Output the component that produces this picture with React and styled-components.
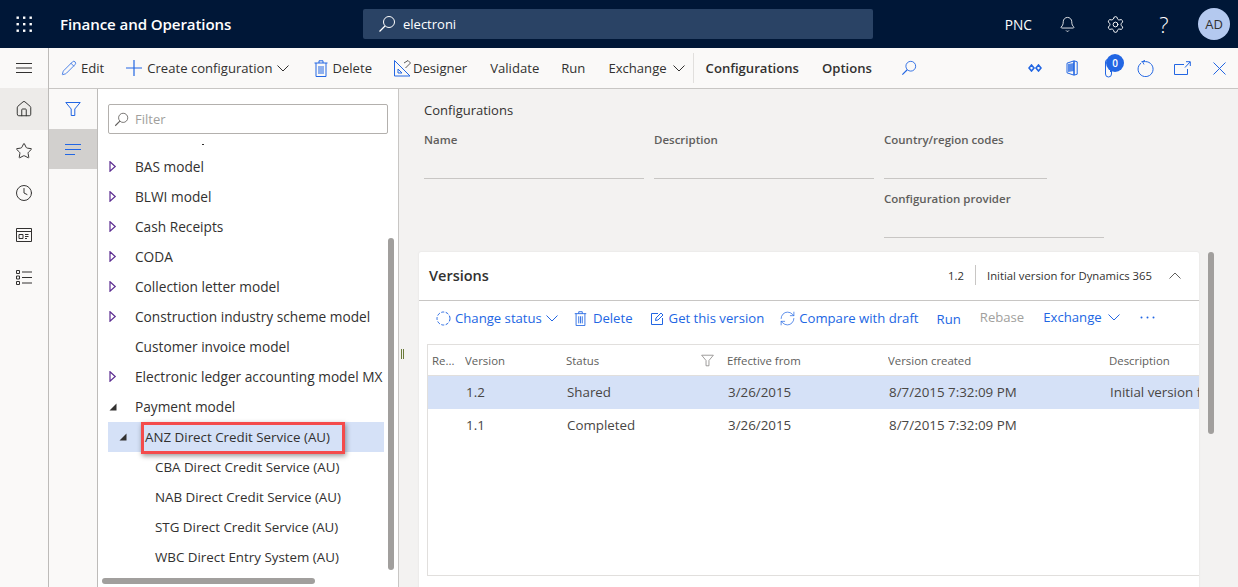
import React from "react";
import styled, { createGlobalStyle } from "styled-components";
import { Pencil, Home, Star, Clock, Bell, Settings, RefreshCw } from "lucide-react";

const GlobalStyle = createGlobalStyle`
    html, body { margin: 0; padding: 0; }
    body {
        font-family: "Open Sans", "Liberation Sans", sans-serif;
        font-size: 13px;
        color: #323130;
        background: #f3f2f1;
        overflow: hidden;
    }
    * { box-sizing: border-box; }
`;

const BLUE = "#2266e3";

const Page = styled.div`
    width: 1238px;
    height: 587px;
    display: flex;
    flex-direction: column;
    overflow: hidden;
`;

/* top bar */
const Header = styled.header`
    height: 48px;
    flex: none;
    background: #001737;
    color: #fff;
    display: flex;
    align-items: center;
`;
const Waffle = styled.div`
    width: 48px;
    display: flex;
    justify-content: center;
    margin-right: 12px;
`;
const AppName = styled.div`
    width: 303px;
    font-size: 15.1px;
    font-weight: 600;
    letter-spacing: -0.1px;
`;
const SearchBox = styled.div`
    width: 510px;
    height: 30px;
    background: #2a4365;
    border-radius: 2px;
    display: flex;
    align-items: center;
    gap: 7px;
    padding-left: 15px;
    font-size: 13px;
    color: #fff;
`;
const HeaderRight = styled.div`
    margin-left: auto;
    display: flex;
    align-items: center;
    padding-right: 8px;
`;
const Company = styled.span`
    font-size: 13.7px;
    margin-right: 11px;
`;
const HeaderIcon = styled.div`
    width: 48px;
    display: flex;
    justify-content: center;
    align-items: center;
    font-size: 22px;
    font-weight: 300;
`;
const HelpMark = styled.span`
    margin-left: 2px;
`;
const Avatar = styled.div`
    width: 32px;
    height: 32px;
    margin-left: 11px;
    border-radius: 50%;
    background: #b4c9ef;
    color: #323130;
    font-size: 13px;
    display: flex;
    align-items: center;
    justify-content: center;
`;

/* shell */
const Shell = styled.div`
    flex: 1;
    display: flex;
    min-height: 0;
`;
const NavRail = styled.nav`
    width: 49px;
    flex: none;
    background: #faf9f8;
    border-right: 1px solid #bdbbb9;
`;
const NavItem = styled.div`
    height: 42px;
    width: 48px;
    display: flex;
    align-items: center;
    justify-content: center;
    background: ${p => (p.$active ? "#edebe9" : "transparent")};
`;
const MenuItem = styled(NavItem)`
    height: 40px;
`;
const Main = styled.div`
    flex: 1;
    min-width: 0;
    display: flex;
    flex-direction: column;
`;

/* action bar */
const ActionBar = styled.div`
    height: 41px;
    flex: none;
    background: #faf9f8;
    border-bottom: 1px solid #c8c6c4;
    display: flex;
    align-items: center;
    padding-left: 12px;
`;
const Action = styled.div`
    display: flex;
    align-items: center;
    gap: ${p => p.$gap ?? 4}px;
    margin-right: ${p => p.$mr ?? 21}px;
    font-size: 13.1px;
    font-weight: ${p => (p.$bold ? 600 : 400)};
    white-space: nowrap;
`;
const Divider = styled.div`
    width: 1px;
    height: 30px;
    background: #e1dfdd;
    margin-right: 12px;
`;
const ActionRight = styled.div`
    margin-left: auto;
    display: flex;
    align-self: stretch;
`;
const IconSlot = styled.div`
    position: relative;
    width: 37px;
    display: flex;
    align-items: center;
    justify-content: center;
`;
const Badge = styled.span`
    position: absolute;
    left: 16px;
    top: 6px;
    width: 18px;
    height: 18px;
    border-radius: 50%;
    background: ${BLUE};
    color: #fff;
    font-size: 10px;
    font-weight: 600;
    display: flex;
    align-items: center;
    justify-content: center;
`;

/* content */
const Content = styled.div`
    flex: 1;
    min-height: 0;
    display: flex;
`;
const FilterRail = styled.div`
    width: 49px;
    flex: none;
    background: #faf9f8;
    border-right: 1px solid #bdbbb9;
`;
const RailBtn = styled.div`
    height: 40px;
    display: flex;
    align-items: center;
    justify-content: center;
    background: ${p => (p.$active ? "#d2d0ce" : "transparent")};
`;
const TreePane = styled.div`
    position: relative;
    width: 301px;
    flex: none;
    background: #fff;
    border-right: 1px solid #c8c6c4;
    padding: 15px 10px 0;
    overflow: hidden;
`;
const FilterInput = styled.div`
    height: 30px;
    border: 1px solid #b3b0ad;
    border-radius: 2px;
    display: flex;
    align-items: center;
    gap: 6px;
    padding-left: 5px;
    color: #a19f9d;
`;
const TreeList = styled.div`
    margin-top: 8px;
    height: 430px;
    width: 276px;
    overflow: hidden;
`;
const TreeClip = styled.div`
    height: 10px;
    padding: 2px 0 0 94px;
`;
const ClippedMark = styled.div`
    width: 2px;
    height: 1px;
    background: #323130;
`;
const TreeRow = styled.div`
    position: relative;
    height: 30px;
    display: flex;
    align-items: center;
    padding-left: ${p => 27 + p.$depth * 10}px;
    padding-bottom: ${p => (p.$root ? 2 : 0)}px;
    background: ${p => (p.$selected ? "#d5e1f7" : "transparent")};
    font-size: ${p => (p.$root ? 13.7 : 13.35)}px;
    font-weight: ${p => (p.$root ? 500 : 400)};
    white-space: nowrap;
`;
const Expander = styled.span`
    position: absolute;
    left: ${p => 1 + p.$depth * 10}px;
    top: 9px;
    display: flex;
`;
const Highlight = styled.div`
    position: absolute;
    left: 33px;
    top: 0;
    width: 204px;
    height: 32px;
    border: 3px solid #f44b4b;
    box-shadow: 1px 2px 5px rgba(0, 0, 0, 0.4);
`;
const VScroll = styled.div`
    position: absolute;
    left: ${p => p.$left}px;
    top: ${p => p.$top}px;
    width: 6px;
    height: ${p => p.$height}px;
    border-radius: 3px;
    background: #a19f9d;
`;
const HScroll = styled.div`
    position: absolute;
    left: 4px;
    top: 489px;
    width: 213px;
    height: 6px;
    border-radius: 3px;
    background: #a19f9d;
`;

const Details = styled.div`
    position: relative;
    flex: 1;
    min-width: 0;
    background: #f3f2f1;
    padding: 0 0 0 20px;
    overflow: hidden;
`;
const Splitter = styled.div`
    position: absolute;
    left: 2px;
    top: 260px;
    width: 3px;
    height: 10px;
    border-left: 1px solid #6b7a3a;
    border-right: 1px solid #6b7a3a;
`;
const Form = styled.div`
    padding: 12px 0 0 5px;
    height: 163px;
`;
const FormTitle = styled.div`
    height: 18px;
    line-height: 18px;
`;
const Fields = styled.div`
    display: flex;
    gap: 10px;
    margin-top: 12px;
`;
const FieldCol = styled.div`
    display: flex;
    flex-direction: column;
    gap: 11px;
`;
const Field = styled.div`
    width: ${p => p.$width}px;
    height: 48px;
    border-bottom: 1px solid #c8c6c4;
    font-size: 11.5px;
    font-weight: 600;
    color: #605e5c;
    line-height: 18px;
`;

const Card = styled.section`
    width: 780px;
    height: 340px;
    background: #fff;
    border-radius: 2px;
    box-shadow: 0 0 2px rgba(0, 0, 0, 0.1);
`;
const CardHeader = styled.div`
    height: 49px;
    border-bottom: 1px solid #c8c6c4;
    display: flex;
    align-items: center;
    padding: 0 18px 2px 10px;
`;
const CardTitle = styled.div`
    font-size: 14.5px;
    font-weight: 600;
`;
const CardSummary = styled.div`
    margin-left: auto;
    display: flex;
    align-items: center;
    font-size: 11.3px;
    gap: 11px;
`;
const SummarySep = styled.div`
    width: 1px;
    height: 20px;
    background: #c8c6c4;
`;
const SummaryToggle = styled.span`
    display: flex;
    margin-left: 6px;
    color: #605e5c;
`;
const CardBar = styled.div`
    height: 43px;
    padding: 0 0 9px 17px;
    display: flex;
    align-items: center;
    font-size: 13.15px;
`;
const CardAction = styled.div`
    display: flex;
    align-items: center;
    gap: ${p => p.$gap ?? 5}px;
    margin-right: ${p => p.$mr ?? 17}px;
    color: ${p => (p.$disabled ? "#a19f9d" : BLUE)};
    white-space: nowrap;
    transform: translateY(${p => p.$shift ?? 0}px);
`;
const Grid = styled.div`
    margin-left: 8px;
    height: 232px;
    border: 1px solid #e1dfdd;
    border-right: none;
    overflow: hidden;
`;
const GridRow = styled.div`
    display: grid;
    grid-template-columns: 37px 101px 161px 161px 221px 120px;
    height: ${p => (p.$head ? 31 : 33)}px;
    padding-bottom: ${p => (p.$head ? 0 : 2)}px;
    align-items: center;
    background: ${p => (p.$selected ? "#d5e1f7" : "transparent")};
    border-bottom: ${p => (p.$head ? "1px solid #e1dfdd" : "none")};
    color: ${p => (p.$head ? "#605e5c" : "#484644")};
    font-size: ${p => (p.$head ? 11.4 : 13.35)}px;
`;
const Cell = styled.div`
    padding-left: ${p => p.$pad ?? 1}px;
    white-space: nowrap;
    overflow: hidden;
    display: flex;
    align-items: center;
    justify-content: space-between;
`;
const CellIcon = styled.span`
    display: flex;
    margin-right: 13px;
`;

const IconLine = { fill: "none", stroke: "currentColor", strokeWidth: 1 };

const WaffleIcon = () => (
    <svg width="16" height="16" viewBox="0 0 16 16" fill="#fff">
        {[0, 1, 2].flatMap(r => [0, 1, 2].map(c => <rect key={`${r}${c}`} x={c * 6.5 + 0.5} y={r * 6.5 + 0.5} width="2.4" height="2.4" />))}
    </svg>
);
const Magnifier = ({ size = 18, color = "currentColor" }) => (
    <svg width={size} height={size} viewBox="0 0 18 18" style={{ color }}>
        <circle cx="11" cy="7" r="5.5" {...IconLine} />
        <path d="M7 11 L1.5 16.5" {...IconLine} strokeWidth="1.3" />
    </svg>
);
const Hamburger = () => (
    <svg width="16" height="10" viewBox="0 0 16 10" stroke="#323130">
        <path d="M0 .5h16M0 5h16M0 9.5h16" />
    </svg>
);
const Funnel = ({ size = 16, color = BLUE }) => (
    <svg width={size} height={size} viewBox="0 0 16 16" fill="none" stroke={color}>
        <path d="M.8 1.5h14.4L9.8 8v6.5H6.2V8z" />
    </svg>
);
const LinesIcon = () => (
    <svg width="16" height="11" viewBox="0 0 16 11" stroke={BLUE}>
        <path d="M0 .5h16M0 5.5h16M0 10.5h10" />
    </svg>
);
const Workspace = () => (
    <svg width="16" height="14" viewBox="0 0 16 14" fill="none" stroke="#323130">
        <path d="M.5.5h15v13H.5zM.5 3.5h15M3 6.5h4v4H3zM9 6.5h3.5M9 8.5h3.5M9 10.5h2" />
    </svg>
);
const ListIcon = () => (
    <svg width="16" height="15" viewBox="0 0 16 15" fill="none" stroke="#323130">
        <path d="M.5.5h3v3h-3zM.5 6h3v3h-3zM.5 11.5h3v3h-3zM6 2h10M6 7.5h10M6 13h10" />
    </svg>
);
const Chevron = ({ up, color = "currentColor" }) => (
    <svg width="12" height="7" viewBox="0 0 12 7" fill="none" stroke={color}>
        <path d={up ? "M.5 6.5L6 1l5.5 5.5" : "M.5.5L6 6 11.5.5"} />
    </svg>
);
const PlusIcon = () => (
    <svg width="16" height="16" viewBox="0 0 16 16" stroke={BLUE} strokeWidth="1.2">
        <path d="M8 0v16M0 8h16" />
    </svg>
);
const TrashIcon = ({ width = 14, height = 17 }) => (
    <svg width={width} height={height} viewBox="0 0 14 17" fill="none" stroke={BLUE}>
        <path d="M.5 3h13M5 3V.8h4V3M2 3v13.5h10V3M5 6v8M7 6v8M9 6v8" />
    </svg>
);
const DesignerIcon = () => (
    <svg width="17" height="17" viewBox="0 0 17 17" fill="none" stroke={BLUE}>
        <path d="M.5.5l15.5 15.5H.5zM4 9l4 4H4z" />
        <path d="M10 3l4-2.5 2.5 2.5-5 5" stroke="#323130" strokeWidth=".8" />
    </svg>
);
const Diamonds = () => (
    <svg width="14" height="8" viewBox="0 0 14 8" fill="none" stroke={BLUE} strokeWidth="1.6">
        <path d="M3.5 1L6 4 3.5 7 1 4zM10.5 1L13 4l-2.5 3L8 4z" />
    </svg>
);
const OfficeIcon = () => (
    <svg width="12" height="16" viewBox="0 0 12 16" fill="none" stroke={BLUE}>
        <path d="M8 .8L1 3.2v9.6L8 15.2l3.2-1V1.8z" />
        <path d="M2 4v8l6-1V3z" fill={BLUE} stroke="none" opacity=".75" />
        <path d="M8 1v14" strokeWidth="1.6" />
    </svg>
);
const ClipIcon = () => (
    <svg width="10" height="20" viewBox="0 0 10 20" fill="none" stroke={BLUE}>
        <path d="M7.5 5v11a3 3 0 0 1-6 0V4a2.5 2.5 0 0 1 5 0v10" />
    </svg>
);
const Reload = () => (
    <svg width="17" height="17" viewBox="0 0 17 17" fill="none" stroke={BLUE}>
        <path d="M4.2 3a7.5 7.5 0 1 0 4.3-1.4H4.5" />
        <path d="M8 .2L5.5 1.6 7 4.5" strokeWidth=".9" />
    </svg>
);
const OpenIcon = () => (
    <svg width="17" height="14" viewBox="0 0 17 14" fill="none" stroke={BLUE}>
        <path d="M10 3.5H.5v10h13V8M11 6.5L16 1M12 .7h4.3V5" />
    </svg>
);
const CloseIcon = () => (
    <svg width="13" height="13" viewBox="0 0 13 13" stroke={BLUE}>
        <path d="M.5.5l12 12M12.5.5l-12 12" />
    </svg>
);
const StatusIcon = () => (
    <svg width="15" height="15" viewBox="0 0 15 15" fill="none" stroke={BLUE} strokeDasharray="3 1.6">
        <circle cx="7.5" cy="7.5" r="6.5" />
    </svg>
);
const EditBox = () => (
    <svg width="13" height="13" viewBox="0 0 13 13" fill="none" stroke={BLUE}>
        <path d="M7 1.5H.5v11h11V6M4.5 8.5l.5-2.5 5-5 2 2-5 5z" />
    </svg>
);
const MoreDots = () => (
    <svg width="15" height="3" viewBox="0 0 15 3" fill={BLUE}>
        <circle cx="1.5" cy="1.5" r="1" />
        <circle cx="7.5" cy="1.5" r="1" />
        <circle cx="13.5" cy="1.5" r="1" />
    </svg>
);
const Triangle = ({ open }) => (
    <svg width="8" height="11" viewBox="0 0 8 11">
        {open
            ? <path d="M7.5 2.5v7h-7z" fill="#323130" />
            : <path d="M1 .8L6.2 5.5 1 10.2z" fill="none" stroke="#5c2d91" strokeWidth="1.2" />}
    </svg>
);

const treeItems = [
    { label: "BAS model", depth: 0 },
    { label: "BLWI model", depth: 0 },
    { label: "Cash Receipts", depth: 0 },
    { label: "CODA", depth: 0 },
    { label: "Collection letter model", depth: 0 },
    { label: "Construction industry scheme model", depth: 0 },
    { label: "Customer invoice model", depth: 0, leaf: true },
    { label: "Electronic ledger accounting model MX", depth: 0 },
    { label: "Payment model", depth: 0, open: true },
    { label: "ANZ Direct Credit Service (AU)", depth: 1, open: true, selected: true },
    { label: "CBA Direct Credit Service (AU)", depth: 2, leaf: true },
    { label: "NAB Direct Credit Service (AU)", depth: 2, leaf: true },
    { label: "STG Direct Credit Service (AU)", depth: 2, leaf: true },
    { label: "WBC Direct Entry System (AU)", depth: 2, leaf: true },
];

const versions = [
    { version: "1.2", status: "Shared", from: "3/26/2015", created: "8/7/2015 7:32:09 PM", description: "Initial version for Dynamics 365", selected: true },
    { version: "1.1", status: "Completed", from: "3/26/2015", created: "8/7/2015 7:32:09 PM", description: "" },
];

export default function App() {
    return (
        <Page>
            <GlobalStyle />
            <Header>
                <Waffle><WaffleIcon /></Waffle>
                <AppName>Finance and Operations</AppName>
                <SearchBox><Magnifier size={18} color="#fff" />electroni</SearchBox>
                <HeaderRight>
                    <Company>PNC</Company>
                    <HeaderIcon><Bell size={17} strokeWidth={1.2} /></HeaderIcon>
                    <HeaderIcon><Settings size={19} strokeWidth={1.2} /></HeaderIcon>
                    <HeaderIcon><HelpMark>?</HelpMark></HeaderIcon>
                    <Avatar>AD</Avatar>
                </HeaderRight>
            </Header>
            <Shell>
                <NavRail>
                    <MenuItem><Hamburger /></MenuItem>
                    <NavItem $active><Home size={18} strokeWidth={1.3} color="#323130" /></NavItem>
                    <NavItem><Star size={18} strokeWidth={1.3} color="#323130" /></NavItem>
                    <NavItem><Clock size={18} strokeWidth={1.3} color="#323130" /></NavItem>
                    <NavItem><Workspace /></NavItem>
                    <NavItem><ListIcon /></NavItem>
                </NavRail>
                <Main>
                    <ActionBar>
                        <Action $mr={22}><Pencil size={16} strokeWidth={1.2} color={BLUE} />Edit</Action>
                        <Action $gap={5} $mr={25}><PlusIcon />Create configuration<Chevron /></Action>
                        <Action $gap={4} $mr={22}><TrashIcon />Delete</Action>
                        <Action $gap={2} $mr={23}><DesignerIcon />Designer</Action>
                        <Action $mr={22}>Validate</Action>
                        <Action $mr={23}>Run</Action>
                        <Action $gap={6} $mr={8}>Exchange<Chevron /></Action>
                        <Divider />
                        <Action $bold $mr={23}>Configurations</Action>
                        <Action $bold $mr={29}>Options</Action>
                        <Magnifier size={16} color={BLUE} />
                        <ActionRight>
                            <IconSlot><Diamonds /></IconSlot>
                            <IconSlot><OfficeIcon /></IconSlot>
                            <IconSlot><ClipIcon /><Badge>0</Badge></IconSlot>
                            <IconSlot><Reload /></IconSlot>
                            <IconSlot><OpenIcon /></IconSlot>
                            <IconSlot><CloseIcon /></IconSlot>
                        </ActionRight>
                    </ActionBar>
                    <Content>
                        <FilterRail>
                            <RailBtn><Funnel /></RailBtn>
                            <RailBtn $active><LinesIcon /></RailBtn>
                        </FilterRail>
                        <TreePane>
                            <FilterInput><Magnifier size={15} color="#605e5c" />Filter</FilterInput>
                            <TreeList>
                                <TreeClip><ClippedMark /></TreeClip>
                                {treeItems.map(item => (
                                    <TreeRow key={item.label} $depth={item.depth} $selected={item.selected} $root={item.depth === 0}>
                                        {!item.leaf && <Expander $depth={item.depth}><Triangle open={item.open} /></Expander>}
                                        {item.label}
                                        {item.selected && <Highlight />}
                                    </TreeRow>
                                ))}
                            </TreeList>
                            <VScroll $left={290} $top={149} $height={332} />
                            <HScroll />
                        </TreePane>
                        <Details>
                            <Splitter />
                            <Form>
                                <FormTitle>Configurations</FormTitle>
                                <Fields>
                                    <Field $width={220}>Name</Field>
                                    <Field $width={220}>Description</Field>
                                    <FieldCol>
                                        <Field $width={163}>Country/region codes</Field>
                                        <Field $width={220}>Configuration provider</Field>
                                    </FieldCol>
                                </Fields>
                            </Form>
                            <Card>
                                <CardHeader>
                                    <CardTitle>Versions</CardTitle>
                                    <CardSummary>
                                        1.2
                                        <SummarySep />
                                        Initial version for Dynamics 365
                                        <SummaryToggle><Chevron up /></SummaryToggle>
                                    </CardSummary>
                                </CardHeader>
                                <CardBar>
                                    <CardAction $mr={16} $gap={4}><StatusIcon />Change status<Chevron color={BLUE} /></CardAction>
                                    <CardAction $mr={18} $gap={6}><TrashIcon width={13} height={15} />Delete</CardAction>
                                    <CardAction $mr={15}><EditBox />Get this version</CardAction>
                                    <CardAction $mr={18} $gap={3}><RefreshCw size={17} strokeWidth={1} color={BLUE} />Compare with draft</CardAction>
                                    <CardAction $mr={19} $shift={1}>Run</CardAction>
                                    <CardAction $mr={19} $shift={-1} $disabled>Rebase</CardAction>
                                    <CardAction $mr={20} $shift={-1} $gap={6}>Exchange<Chevron color={BLUE} /></CardAction>
                                    <CardAction $shift={-1}><MoreDots /></CardAction>
                                </CardBar>
                                <Grid>
                                    <GridRow $head>
                                        <Cell $pad={4}>Re...</Cell>
                                        <Cell $pad={0}>Version</Cell>
                                        <Cell $pad={0}>Status<CellIcon><Funnel size={13} color="#8a8886" /></CellIcon></Cell>
                                        <Cell $pad={0}>Effective from</Cell>
                                        <Cell $pad={0}>Version created</Cell>
                                        <Cell $pad={0}>Description</Cell>
                                    </GridRow>
                                    {versions.map(v => (
                                        <GridRow key={v.version} $selected={v.selected}>
                                            <Cell />
                                            <Cell>{v.version}</Cell>
                                            <Cell>{v.status}</Cell>
                                            <Cell>{v.from}</Cell>
                                            <Cell>{v.created}</Cell>
                                            <Cell>{v.description}</Cell>
                                        </GridRow>
                                    ))}
                                </Grid>
                            </Card>
                            <VScroll $left={809} $top={163} $height={182} />
                        </Details>
                    </Content>
                </Main>
            </Shell>
        </Page>
    );
}
